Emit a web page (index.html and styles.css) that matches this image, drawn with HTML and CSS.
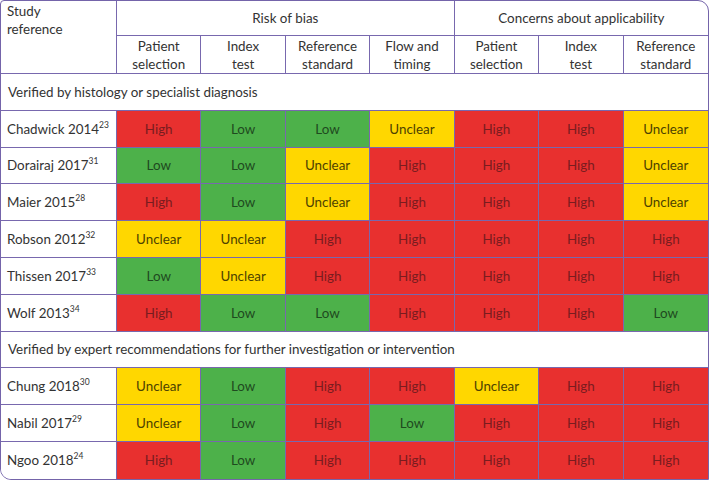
FILE: index.html
```html
<!DOCTYPE html>
<html>
<head>
<meta charset="utf-8">
<link rel="stylesheet" href="styles.css">
</head>
<body>
<div class="frame">
<table class="grid">
<colgroup>
<col class="c-study">
<col class="c-val"><col class="c-val"><col class="c-val"><col class="c-val">
<col class="c-val"><col class="c-val"><col class="c-val">
</colgroup>
<thead>
<tr class="h1">
<th rowspan="2" class="study-head">Study<br>reference</th>
<th colspan="4">Risk of bias</th>
<th colspan="3" class="last">Concerns about applicability</th>
</tr>
<tr class="h2">
<th>Patient<br>selection</th>
<th>Index<br>test</th>
<th>Reference<br>standard</th>
<th>Flow and<br>timing</th>
<th>Patient<br>selection</th>
<th>Index<br>test</th>
<th class="last">Reference<br>standard</th>
</tr>
</thead>
<tbody>
<tr class="sec"><td colspan="8" class="last">Verified by histology or specialist diagnosis</td></tr>
<tr><td class="name">Chadwick 2014<sup>23</sup></td><td class="hi">High</td><td class="lo">Low</td><td class="lo">Low</td><td class="un">Unclear</td><td class="hi">High</td><td class="hi">High</td><td class="un last">Unclear</td></tr>
<tr><td class="name">Dorairaj 2017<sup>31</sup></td><td class="lo">Low</td><td class="lo">Low</td><td class="un">Unclear</td><td class="hi">High</td><td class="hi">High</td><td class="hi">High</td><td class="un last">Unclear</td></tr>
<tr><td class="name">Maier 2015<sup>28</sup></td><td class="hi">High</td><td class="lo">Low</td><td class="un">Unclear</td><td class="hi">High</td><td class="hi">High</td><td class="hi">High</td><td class="un last">Unclear</td></tr>
<tr><td class="name">Robson 2012<sup>32</sup></td><td class="un">Unclear</td><td class="un">Unclear</td><td class="hi">High</td><td class="hi">High</td><td class="hi">High</td><td class="hi">High</td><td class="hi last">High</td></tr>
<tr><td class="name">Thissen 2017<sup>33</sup></td><td class="lo">Low</td><td class="un">Unclear</td><td class="hi">High</td><td class="hi">High</td><td class="hi">High</td><td class="hi">High</td><td class="hi last">High</td></tr>
<tr><td class="name">Wolf 2013<sup>34</sup></td><td class="hi">High</td><td class="lo">Low</td><td class="lo">Low</td><td class="hi">High</td><td class="hi">High</td><td class="hi">High</td><td class="lo last">Low</td></tr>
<tr class="sec"><td colspan="8" class="last">Verified by expert recommendations for further investigation or intervention</td></tr>
<tr><td class="name">Chung 2018<sup>30</sup></td><td class="un">Unclear</td><td class="lo">Low</td><td class="hi">High</td><td class="hi">High</td><td class="un">Unclear</td><td class="hi">High</td><td class="hi last">High</td></tr>
<tr><td class="name">Nabil 2017<sup>29</sup></td><td class="un">Unclear</td><td class="lo">Low</td><td class="hi">High</td><td class="lo">Low</td><td class="hi">High</td><td class="hi">High</td><td class="hi last">High</td></tr>
<tr class="final"><td class="name">Ngoo 2018<sup>24</sup></td><td class="hi">High</td><td class="lo">Low</td><td class="hi">High</td><td class="hi">High</td><td class="hi">High</td><td class="hi">High</td><td class="hi last">High</td></tr>
</tbody>
</table>
</div>
</body>
</html>
```
FILE: styles.css
```css
html, body {
  margin: 0;
  padding: 0;
  background: #ffffff;
}
body {
  font-family: Lato, "Liberation Sans", sans-serif;
  font-size: 13.4px;
  color: #333333;
}
.frame {
  width: 707px;
  border: 1px solid #7464aa;
  border-radius: 4px 11px 0 11px;
  overflow: hidden;
}
.grid {
  width: 707px;
  border-collapse: separate;
  border-spacing: 0;
  table-layout: fixed;
}
.c-study { width: 116px; }
.grid th, .grid td {
  border-right: 1px solid #7868ae;
  border-bottom: 1px solid #7868ae;
  padding: 0;
  font-weight: normal;
  text-align: center;
  line-height: 18px;
}
.grid .last { border-right: none; }
.grid .final td { border-bottom: none; }
.h1 th { height: 34px; }
.h2 th { height: 37px; }
.study-head {
  text-align: left !important;
  vertical-align: top;
  padding: 1px 6px 0 !important;
}
tbody tr td { height: 35.8px; }
.grid .final td { height: 36.8px; }
.sec td {
  text-align: left;
  padding-left: 7px;
  background: #ffffff;
}
.name {
  text-align: left !important;
  padding-left: 6px !important;
  background: #ffffff;
  white-space: nowrap;
}
sup {
  font-size: 8.5px;
  line-height: 0;
  vertical-align: 6px;
}
.hi { background: #e8302f; color: #7a1c1f; }
.lo { background: #4db14a; color: #1f4a1f; }
.un { background: #ffd700; color: #4d4200; }
```
